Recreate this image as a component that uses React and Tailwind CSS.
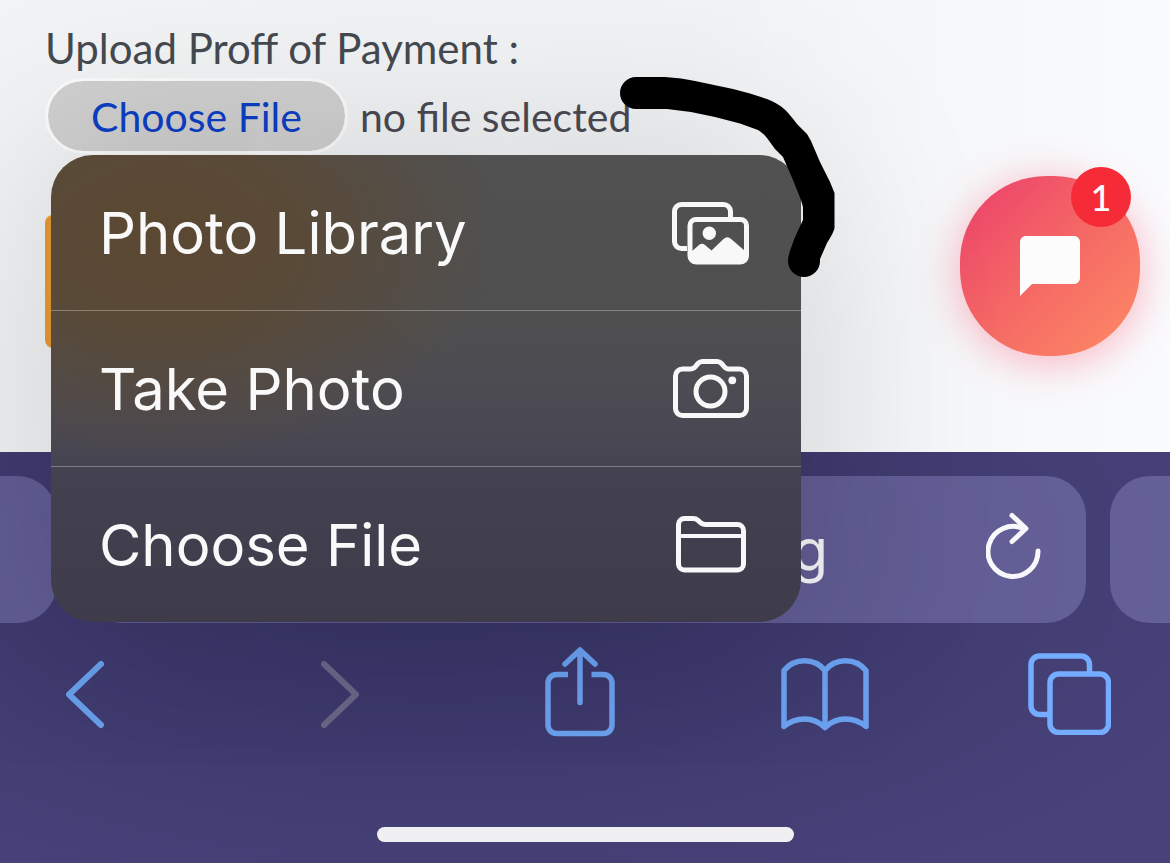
import { useState } from 'react'

function PhotosIcon () {
  return (
    <svg width="77" height="62" viewBox="0 0 77 62" fill="none" stroke="#f8f8f8" strokeWidth="5" className="overflow-visible" aria-hidden="true">
      <path d="M15 46.5H9.5a7 7 0 0 1-7-7v-30a7 7 0 0 1 7-7h42a7 7 0 0 1 7 7V15" />
      <rect x="18" y="17.500" width="56.500" height="42.500" rx="6" />
      <circle cx="37.300" cy="31.200" r="6.700" fill="#f8f8f8" stroke="none" />
      <path d="M19 50l8-7q3-2.600 6 0l6.500 5.500L51.500 37q3.800-3.600 7.600 0L73 49v9a4 4 0 0 1-4 4H23a4 4 0 0 1-4-4z" fill="#f8f8f8" stroke="none" />
    </svg>
  )
}

function CameraIcon () {
  return (
    <svg width="76" height="59" viewBox="0 0 76 59" fill="none" stroke="#f8f8f8" strokeWidth="5" aria-hidden="true">
      <path d="M9.500 10H17q3.500 0 5.500-2.500l2.500-3q1.800-2 4.500-2H44q2.700 0 4.500 2l2.500 3Q53 10 56 10h10.500a7 7 0 0 1 7 7v32.500a7 7 0 0 1-7 7h-57a7 7 0 0 1-7-7V17a7 7 0 0 1 7-7z" />
      <circle cx="37.500" cy="32.500" r="14.500" />
      <circle cx="59.300" cy="21.300" r="3.900" fill="#f8f8f8" stroke="none" />
    </svg>
  )
}

function FolderIcon () {
  return (
    <svg width="70" height="57" viewBox="0 0 70 57" fill="none" stroke="#f8f8fa" strokeWidth="5" aria-hidden="true">
      <path d="M8.500 2.500H17q3 0 5 1.800L25 7q2 1.500 4.500 1.500h32a6 6 0 0 1 6 6V48a6 6 0 0 1-6 6h-53a6 6 0 0 1-6-6V8.500a6 6 0 0 1 6-6z" />
      <path d="M3 20h64" strokeWidth="4" />
    </svg>
  )
}

function ReloadIcon () {
  return (
    <svg width="55" height="75" viewBox="0 0 55 75" fill="none" stroke="#f8f8fc" strokeWidth="5" strokeLinecap="round" strokeLinejoin="round" aria-hidden="true">
      <path d="M52 39A25 25 0 1 1 38 17" />
      <path d="M26 3.500L40 16.500 26 29.500" />
    </svg>
  )
}

function ChevronIcon ({ forward }) {
  return (
    <svg width="38" height="67" viewBox="0 0 38 67" fill="none" stroke={forward ? '#6a6687' : '#699fec'} strokeWidth="6" strokeLinecap="round" strokeLinejoin="round" aria-hidden="true">
      <path d={forward ? 'M3 3l32 30.500L3 64' : 'M35 3L3 33.500 35 64'} />
    </svg>
  )
}

function ShareIcon () {
  return (
    <svg width="70" height="94" viewBox="0 0 70 94" fill="none" stroke="#6ba1f0" strokeWidth="5.500" strokeLinecap="round" strokeLinejoin="round" aria-hidden="true">
      <path d="M23 27.500H11.500a8.500 8.500 0 0 0-8.500 8.500V78a8.500 8.500 0 0 0 8.500 8.500h47A8.500 8.500 0 0 0 67 78V36a8.500 8.500 0 0 0-8.500-8.500H46.500" strokeLinecap="butt" />
      <path d="M35 55.500V3.500M20 17L35 3l15 14" />
    </svg>
  )
}

function BookIcon () {
  return (
    <svg width="88" height="73" viewBox="0 0 88 73" fill="none" stroke="#6ba1f0" strokeWidth="5.500" strokeLinecap="round" strokeLinejoin="round" aria-hidden="true">
      <path d="M3 12.500Q11 2.800 23.500 2.800T44 12.500Q52 2.800 64.500 2.800T85 12.500V68.500Q76 61 64.500 61T44 69.500Q35 61 23.500 61T3 68.500zM44 12.500v57" />
    </svg>
  )
}

function TabsIcon () {
  return (
    <svg width="83" height="82" viewBox="0 0 83 82" fill="none" stroke="#74acff" strokeWidth="5.500" aria-hidden="true">
      <path d="M20 61.500h-8.500a8.500 8.500 0 0 1-8.500-8.500V11.500A8.500 8.500 0 0 1 11.500 3H53a8.500 8.500 0 0 1 8.500 8.500V19" />
      <rect x="22" y="21" width="58.500" height="58.500" rx="8.500" />
    </svg>
  )
}

// thick marker line drawn from the file name down to the menu
function MarkerStroke () {
  return (
    <svg className="pointer-events-none absolute left-[620px] top-[77px] z-30" width="215" height="200" viewBox="620 77 215 200" aria-hidden="true">
      <path d="M636 77H665Q682 78 695 81L733 89 750 93.500 767 99Q777 103 783 108 788 112 797 124L807 134 811 141 820 162 830 182 834.500 193V228Q834 232 827 243L820 259V261A16 16 0 0 1 788 261Q788 256 791 248L795 237 803 220V207L801 200 793 180 783 157 775 149 767 138Q763 133 758 130L740 123.500 715 117 691 112 667 109H636A16 16 0 0 1 636 77z" />
    </svg>
  )
}

const menuItems = [
  { label: 'Photo Library', Icon: PhotosIcon },
  { label: 'Take Photo', Icon: CameraIcon },
  { label: 'Choose File', Icon: FolderIcon },
]

function UploadMenu () {
  return (
    <div role="menu" className="absolute left-1.5 top-full z-20 mt-px w-[750px] divide-y divide-white/30 overflow-hidden rounded-[42px] bg-[radial-gradient(ellipse_340px_230px_at_110px_80px,#5b4832_0%,#5a4935e6_40%,#5a493500_100%),linear-gradient(to_bottom,#515151_0%,#4f4f50_35%,#4a4953_58%,#434150_70%,#3e3b4b_100%)] shadow-[0_10px_200px_rgba(0,0,0,0.18)]">
      {menuItems.map(({ label, Icon }) => (
        <button key={label} type="button" role="menuitem" className="flex h-[156px] w-full items-center justify-between pl-12 pr-[52px] font-['Inter',sans-serif] text-[58px] leading-none text-[#f9f9f9] last:h-[155px]">
          {label}
          <span className="flex w-[77px] justify-center">
            <Icon />
          </span>
        </button>
      ))}
    </div>
  )
}

function ChatButton () {
  return (
    <button type="button" aria-label="Open chat" className="absolute right-[30px] top-44 flex size-[180px] items-center justify-center rounded-[86px] bg-linear-135 from-[#ee4b69] from-15% via-[#f56865] to-[#fc8465] to-90% shadow-[0_6px_42px_rgba(255,70,105,0.4)]">
      <svg width="72" height="72" viewBox="0 0 24 24" fill="#fcfcfc" aria-hidden="true">
        <path d="M20 2H4c-1.100 0-2 .9-2 2v18l4-4h14c1.100 0 2-.9 2-2V4c0-1.100-.9-2-2-2z" />
      </svg>
      <span className="absolute -top-[9px] right-[9px] flex size-[60px] items-center justify-center rounded-full bg-[#f52b38] text-4xl font-medium text-white">1</span>
    </button>
  )
}

function BrowserBar () {
  return (
    <footer className="flex-1 bg-[radial-gradient(ellipse_850px_380px_at_38%_25%,#353264_0%,#3e3a6e_50%,#48427a_100%)] pb-[21px] pt-6">
      <div className="flex h-[147px] gap-6">
        <div className="w-[57px] rounded-r-[40px] bg-[#8480b9]/50" />
        <div className="flex flex-1 items-center justify-between rounded-[40px] bg-[#8480b9]/50 pr-[45px]">
          <input aria-label="Address" defaultValue="g" className="w-[747px] bg-transparent text-right font-['Inter',sans-serif] text-[58px] leading-none text-[#f4f3f6] outline-none" />
          <button type="button" aria-label="Reload">
            <ReloadIcon />
          </button>
        </div>
        <div className="w-[60px] rounded-l-[40px] bg-[#8480b9]/50" />
      </div>
      <nav className="mt-6 grid h-[94px] grid-cols-[255fr_224fr_236fr_247fr_83fr] items-center justify-items-start pl-[66px] pr-[59px]">
        <button type="button" aria-label="Back"><ChevronIcon /></button>
        <button type="button" aria-label="Forward" disabled><ChevronIcon forward /></button>
        <button type="button" aria-label="Share"><ShareIcon /></button>
        <button type="button" aria-label="Bookmarks"><BookIcon /></button>
        <button type="button" aria-label="Tabs"><TabsIcon /></button>
      </nav>
      <div className="mx-auto mt-[86px] h-[15px] w-[417px] rounded-full bg-[#f0f0f2]" />
    </footer>
  )
}

export default function App () {
  const [open, setOpen] = useState(true)

  return (
    <div className="relative flex min-h-screen flex-col overflow-hidden font-['Lato',sans-serif]">
      <main className="bg-linear-to-r from-[#f1f3f4] from-60% to-[#fafbfd] to-100% px-[45px] pb-[104px] pt-5">
        <label htmlFor="proof" className="block h-[58px] text-[42px] leading-[56px] text-[#454a50]">Upload Proff of Payment :</label>
        <div className="relative flex items-center gap-3">
          <button id="proof" type="button" onClick={() => setOpen(!open)} className="h-[76px] rounded-full border-3 border-[#fbfbfb] bg-[#d0d0d1] bg-clip-padding px-[43px] text-[41px] leading-none text-[#0c3fc4]">
            Choose File
          </button>
          <span className="text-[41px] leading-none text-[#4b4a52]">no file selected</span>
          {open && <UploadMenu />}
        </div>
        <button type="button" aria-label="Submit" className="mt-[61px] block h-[133px] w-[260px] rounded-lg bg-[#e79a34]" />
      </main>
      <ChatButton />
      <BrowserBar />
      <MarkerStroke />
    </div>
  )
}
